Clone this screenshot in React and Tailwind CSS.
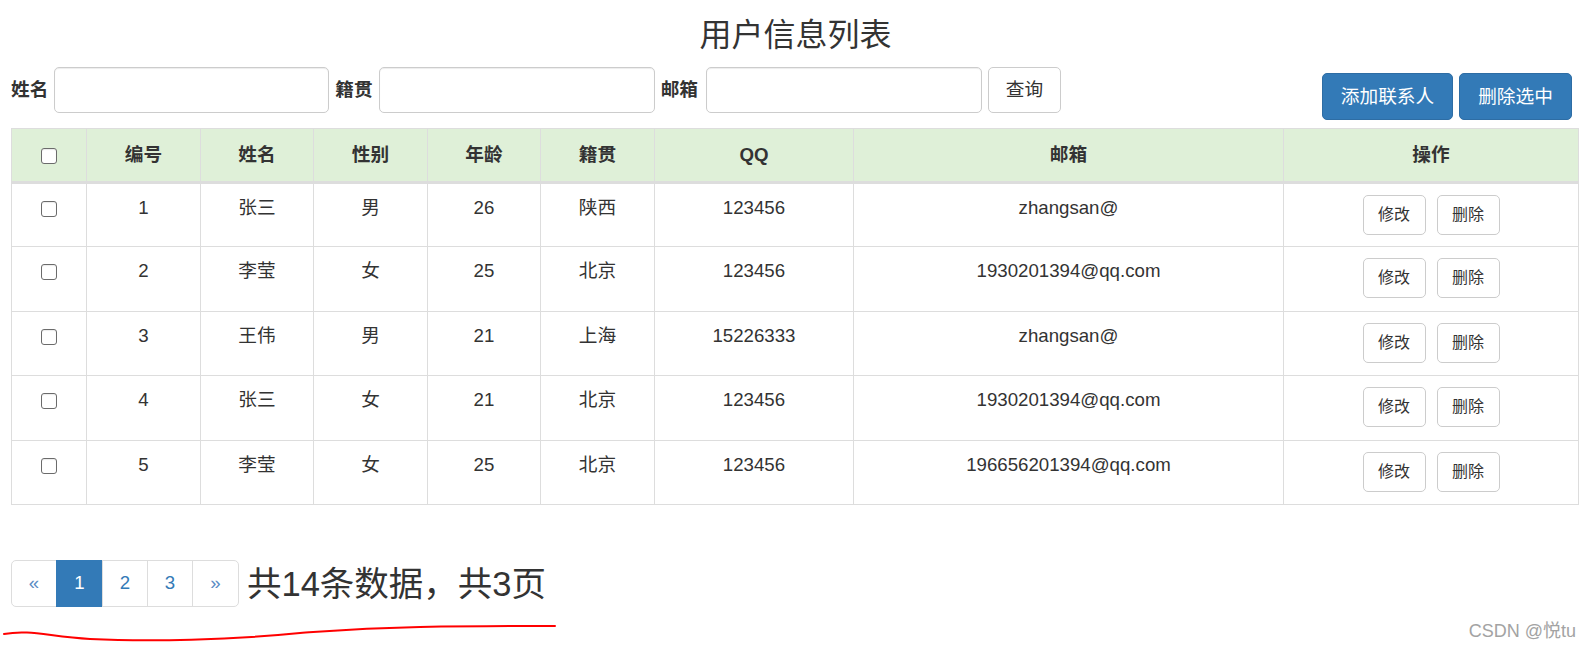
import React from 'react';

const rows = [
  { id: 1, name: '张三', sex: '男', age: 26, place: '陕西', qq: '123456', mail: 'zhangsan@' },
  { id: 2, name: '李莹', sex: '女', age: 25, place: '北京', qq: '123456', mail: '1930201394@qq.com' },
  { id: 3, name: '王伟', sex: '男', age: 21, place: '上海', qq: '15226333', mail: 'zhangsan@' },
  { id: 4, name: '张三', sex: '女', age: 21, place: '北京', qq: '123456', mail: '1930201394@qq.com' },
  { id: 5, name: '李莹', sex: '女', age: 25, place: '北京', qq: '123456', mail: '196656201394@qq.com' },
];

const cols = [
  { label: null, w: 'w-[75px]' },
  { label: '编号', w: 'w-[114px]' },
  { label: '姓名', w: 'w-[113px]' },
  { label: '性别', w: 'w-[114px]' },
  { label: '年龄', w: 'w-[113px]' },
  { label: '籍贯', w: 'w-[114px]' },
  { label: 'QQ', w: 'w-[199px]' },
  { label: '邮箱', w: 'w-[430px]' },
  { label: '操作', w: 'w-[295px]' },
];

function Check() {
  return (
    <span className="inline-block w-[16px] h-[16px] border border-[#6b6b6b] rounded-[3px] bg-white align-middle shadow-[inset_0_1px_1px_rgba(0,0,0,0.08)]"></span>
  );
}

function Cell({ children }) {
  return (
    <td className="border border-[#ddd] align-top text-center pt-[10px] px-[10px]">
      <div className="leading-[27px]">{children}</div>
    </td>
  );
}

export default function App() {
  return (
    <div
      className="relative h-[657px] overflow-hidden bg-white text-[#333] px-[11px]"
      style={{ fontFamily: '"Liberation Sans", Arial, "Noto Sans CJK SC", sans-serif' }}
    >
      <h3 className="text-center text-[32px] leading-[36px] font-normal pt-[17px] pl-[2px]">用户信息列表</h3>

      <div className="flex items-start justify-between h-[46px] mt-[14px]">
        <div className="flex items-center text-[18.67px]">
          <label className="font-bold mr-[6px]">姓名</label>
          <input className="w-[275px] h-[46px] border border-[#ccc] rounded-[5px] shadow-[inset_0_1px_1px_rgba(0,0,0,0.075)] mr-[6px]" />
          <label className="font-bold mr-[6px]">籍贯</label>
          <input className="w-[276px] h-[46px] border border-[#ccc] rounded-[5px] shadow-[inset_0_1px_1px_rgba(0,0,0,0.075)] mr-[6px]" />
          <label className="font-bold mr-[8px]">邮箱</label>
          <input className="w-[276px] h-[46px] border border-[#ccc] rounded-[5px] shadow-[inset_0_1px_1px_rgba(0,0,0,0.075)] mr-[6px]" />
          <button className="w-[73px] h-[46px] border border-[#ccc] rounded-[5px] bg-white text-[#333]">查询</button>
        </div>
        <div className="flex gap-[6px] mt-[6px] mr-[6px] text-[18.67px] text-white">
          <button className="w-[131px] h-[47px] bg-[#337ab7] border border-[#2e6da4] rounded-[5px]">添加联系人</button>
          <button className="w-[113px] h-[47px] bg-[#337ab7] border border-[#2e6da4] rounded-[5px]">删除选中</button>
        </div>
      </div>

      <table className="mt-[15px] w-[1567px] table-fixed border-collapse border border-[#ddd] text-[18.67px]">
        <colgroup>
          {cols.map((c, i) => (
            <col key={i} className={c.w} />
          ))}
        </colgroup>
        <thead>
          <tr className="h-[54px] bg-[#dff0d8]">
            {cols.map((c, i) => (
              <th key={i} className="border border-[#ddd] border-b-[3px] align-middle text-center font-bold">
                {c.label === null ? <Check /> : c.label}
              </th>
            ))}
          </tr>
        </thead>
        <tbody>
          {rows.map((r) => (
            <tr key={r.id} className="h-[64.4px]">
              <td className="border border-[#ddd] align-top text-center pt-[10px]">
                <div className="leading-[27px]"><Check /></div>
              </td>
              <Cell>{r.id}</Cell>
              <Cell>{r.name}</Cell>
              <Cell>{r.sex}</Cell>
              <Cell>{r.age}</Cell>
              <Cell>{r.place}</Cell>
              <Cell>{r.qq}</Cell>
              <Cell>{r.mail}</Cell>
              <td className="border border-[#ddd] align-top pt-[11px]">
                <div className="flex justify-center gap-[11px] text-[16px]">
                  <button className="w-[63px] h-[40px] border border-[#ccc] rounded-[5px] bg-white">修改</button>
                  <button className="w-[63px] h-[40px] border border-[#ccc] rounded-[5px] bg-white">删除</button>
                </div>
              </td>
            </tr>
          ))}
        </tbody>
      </table>

      <div className="flex items-center mt-[55px]">
        <ul className="flex text-[18.67px] text-[#337ab7]">
          <li className="w-[46px] h-[47px] flex items-center justify-center border border-[#ddd] rounded-l-[5px] text-[#5b8cc4]">«</li>
          <li className="w-[47px] h-[47px] flex items-center justify-center border border-[#337ab7] bg-[#337ab7] text-white -ml-px">1</li>
          <li className="w-[46px] h-[47px] flex items-center justify-center border border-[#ddd] -ml-px">2</li>
          <li className="w-[46px] h-[47px] flex items-center justify-center border border-[#ddd] -ml-px">3</li>
          <li className="w-[47px] h-[47px] flex items-center justify-center border border-[#ddd] rounded-r-[5px] -ml-px text-[#5b8cc4]">»</li>
        </ul>
        <span className="ml-[8px] text-[34.5px] leading-[38px] mt-[2px]">共14条数据，共3页</span>
      </div>

      <svg className="absolute left-0 top-[615px]" width="600" height="40" viewBox="0 0 600 40">
        <path
          d="M4 19 C 30 14, 50 22, 90 24 C 150 27, 230 25, 300 18 C 340 15, 360 13, 420 12 C 480 11, 520 11, 555 11"
          fill="none"
          stroke="#ff0000"
          strokeWidth="2"
          strokeLinecap="round"
        />
      </svg>

      <div className="absolute right-[13px] top-[618px] text-[18px] text-[#a3a3a3]">CSDN @悦tu</div>
    </div>
  );
}
